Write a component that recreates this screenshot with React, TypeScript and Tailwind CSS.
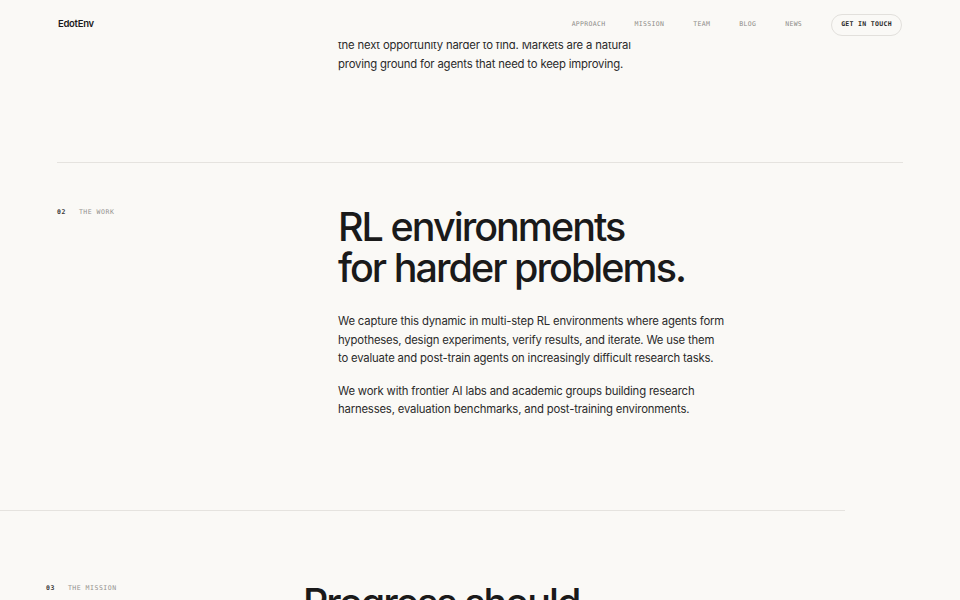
const navLinks = ["Approach", "Mission", "Team", "Blog", "News"];

const mono = "font-['DejaVu_Sans_Mono','Liberation_Mono',monospace]";

const SectionLabel = ({ num, title }: { num: string; title: string }) => (
  <div className={`${mono} flex items-center gap-[13px] text-[6.5px] uppercase tracking-[0.08em]`}>
    <span className="font-bold text-[#3a3a3a]">{num}</span>
    <span className="text-[#94928e]">{title}</span>
  </div>
);

const Header = () => (
  <header className="absolute inset-x-0 top-0 z-10 flex h-[42px] items-center justify-between bg-[#faf9f6] pl-[58px] pr-[58px] pt-[7px]">
    <div className="text-[9.5px] font-semibold tracking-[-0.03em] text-[#1a1a1a]">EdotEnv</div>
    <nav className="flex items-center gap-[29px]">
      {navLinks.map((link) => (
        <a key={link} className={`${mono} pt-[1px] text-[6.5px] uppercase tracking-[0.05em] text-[#8e8c88]`}>
          {link}
        </a>
      ))}
      <a
        className={`${mono} flex h-[22px] items-center rounded-full border border-[#e2e0dc] px-[9px] pt-[1px] text-[6.5px] font-semibold uppercase tracking-[0.05em] text-[#2a2a2a]`}
      >
        Get in touch
      </a>
    </nav>
  </header>
);

const bodyText = "text-[11.3px] leading-[18.6px] tracking-[-0.015em] text-[#2a2a2a]";

export default function App() {
  return (
    <div className="relative h-[600px] overflow-hidden bg-[#faf9f6] font-['Inter','Liberation_Sans',sans-serif] text-[#1a1a1a]">
      <Header />

      {/* tail of section 01, scrolled under the header */}
      <div className="mx-[57px] grid grid-cols-[281px_1fr] pt-[36px]">
        <div />
        <p className={bodyText + " leading-[19px]"}>
          the next opportunity harder to find. Markets are a natural
          <br />
          proving ground for agents that need to keep improving.
        </p>
      </div>

      {/* 02 the work */}
      <section className="mx-[57px] mt-[88px] border-t border-[#e5e3df] pt-[44px]">
        <div className="grid grid-cols-[281px_1fr]">
          <div className="pt-[1px]">
            <SectionLabel num="02" title="The work" />
          </div>
          <div>
            <h2 className="text-[39.5px] font-medium leading-[41px] tracking-[-0.05em] text-[#1a1a1a]">
              RL environments
              <br />
              for harder problems.
            </h2>
            <div className={`mt-[23px] flex flex-col gap-[14px] ${bodyText}`}>
              <p>
                We capture this dynamic in multi-step RL environments where agents form
                <br />
                hypotheses, design experiments, verify results, and iterate. We use them
                <br />
                to evaluate and post-train agents on increasingly difficult research tasks.
              </p>
              <p>
                We work with frontier AI labs and academic groups building research
                <br />
                harnesses, evaluation benchmarks, and post-training environments.
              </p>
            </div>
          </div>
        </div>
      </section>

      {/* 03 the mission, mid-transition */}
      <section className="mt-[91px] w-[845px] border-t border-[#e5e3df] pl-[46px] pt-[72px]">
        <div className="grid grid-cols-[257px_1fr]">
          <div className="pt-[1px]">
            <SectionLabel num="03" title="The mission" />
          </div>
          <h2 className="text-[39.5px] font-medium leading-[41px] tracking-[-0.05em] text-[#1a1a1a]">
            Progress should
          </h2>
        </div>
      </section>
    </div>
  );
}
